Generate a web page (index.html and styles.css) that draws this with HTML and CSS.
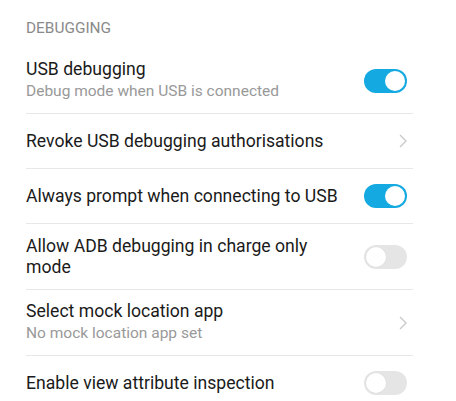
FILE: index.html
```html
<!DOCTYPE html>
<html>
<head>
<meta charset="utf-8">
<link rel="stylesheet" href="styles.css">
</head>
<body>
<div class="list">
  <div class="section-title">DEBUGGING</div>
  <div class="row tall">
    <div class="text">
      <div class="title">USB debugging</div>
      <div class="summary">Debug mode when USB is connected</div>
    </div>
    <span class="switch on"><span class="knob"></span></span>
  </div>
  <div class="row">
    <div class="text"><div class="title">Revoke USB debugging authorisations</div></div>
    <svg class="chevron" width="8" height="14" viewBox="0 0 8 14"><path d="M1 1 L7 7 L1 13" fill="none" stroke="#c8c8c8" stroke-width="1.3"/></svg>
  </div>
  <div class="row">
    <div class="text"><div class="title">Always prompt when connecting to USB</div></div>
    <span class="switch on"><span class="knob"></span></span>
  </div>
  <div class="row tall">
    <div class="text"><div class="title">Allow ADB debugging in charge only mode</div></div>
    <span class="switch"><span class="knob"></span></span>
  </div>
  <div class="row tall">
    <div class="text">
      <div class="title">Select mock location app</div>
      <div class="summary">No mock location app set</div>
    </div>
    <svg class="chevron" width="8" height="14" viewBox="0 0 8 14"><path d="M1 1 L7 7 L1 13" fill="none" stroke="#c8c8c8" stroke-width="1.3"/></svg>
  </div>
  <div class="row">
    <div class="text"><div class="title">Enable view attribute inspection</div></div>
    <span class="switch"><span class="knob"></span></span>
  </div>
</div>
</body>
</html>
```
FILE: styles.css
```css
html, body {
  margin: 0;
  padding: 0;
  background: #ffffff;
}
body {
  font-family: Roboto, "Noto Sans", sans-serif;
  color: #1a1a1a;
}
.list {
  margin-left: 26px;
  width: 387px;
}
.section-title {
  height: 48px;
  box-sizing: border-box;
  padding-top: 19px;
  font-size: 15.4px;
  line-height: 18px;
  color: #8a8a8a;
}
.row {
  display: flex;
  align-items: center;
  justify-content: space-between;
  height: 55px;
  box-sizing: border-box;
  border-bottom: 1px solid #e8e8e8;
  padding-right: 6px;
}
.row.tall {
  height: 66px;
}
.text {
  flex: 1;
  min-width: 0;
  padding-right: 16px;
}
.title {
  font-size: 17.6px;
  line-height: 21px;
  color: #1a1a1a;
}
.summary {
  font-size: 15.5px;
  line-height: 22px;
  color: #999999;
}
.switch {
  position: relative;
  flex: none;
  width: 43px;
  height: 24px;
  border-radius: 12px;
  background: #e5e5e5;
}
.switch .knob {
  position: absolute;
  top: 2px;
  left: 2px;
  width: 20px;
  height: 20px;
  border-radius: 50%;
  background: #ffffff;
  box-shadow: 0 0 0 0.5px #dcdcdc;
}
.switch.on {
  background: #14a9e0;
}
.switch.on .knob {
  left: 21px;
  box-shadow: none;
}
.chevron {
  flex: none;
}
```
